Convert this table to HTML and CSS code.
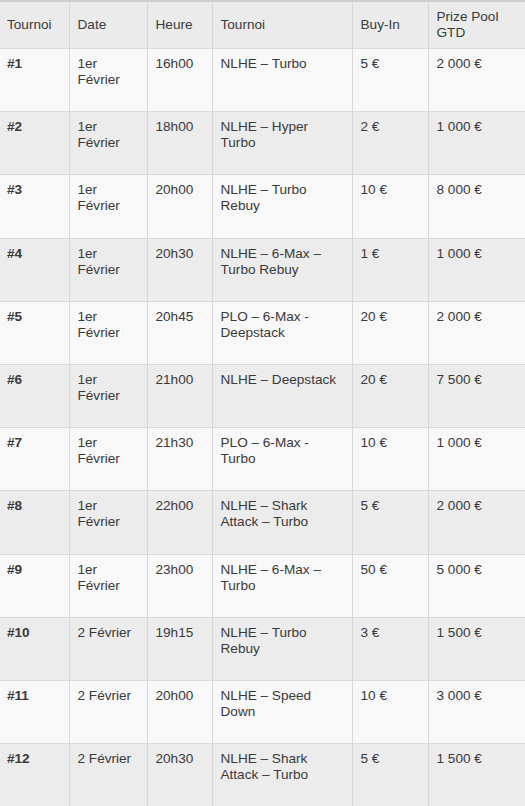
FILE: index.html
```html
<!DOCTYPE html>
<html lang="fr">
<head>
<meta charset="utf-8">
<title>Tournois</title>
<link rel="stylesheet" href="styles.css">
</head>
<body>
<table class="schedule">
  <colgroup>
    <col class="c1"><col class="c2"><col class="c3"><col class="c4"><col class="c5"><col class="c6">
  </colgroup>
  <thead>
    <tr>
      <th>Tournoi</th><th>Date</th><th>Heure</th><th>Tournoi</th><th>Buy-In</th><th>Prize Pool GTD</th>
    </tr>
  </thead>
  <tbody>
    <tr><td class="num">#1</td><td>1er Février</td><td>16h00</td><td>NLHE – Turbo</td><td>5 €</td><td>2 000 €</td></tr>
    <tr><td class="num">#2</td><td>1er Février</td><td>18h00</td><td>NLHE – Hyper Turbo</td><td>2 €</td><td>1 000 €</td></tr>
    <tr><td class="num">#3</td><td>1er Février</td><td>20h00</td><td>NLHE – Turbo Rebuy</td><td>10 €</td><td>8 000 €</td></tr>
    <tr><td class="num">#4</td><td>1er Février</td><td>20h30</td><td>NLHE – 6-Max – Turbo Rebuy</td><td>1 €</td><td>1 000 €</td></tr>
    <tr><td class="num">#5</td><td>1er Février</td><td>20h45</td><td>PLO – 6-Max - Deepstack</td><td>20 €</td><td>2 000 €</td></tr>
    <tr><td class="num">#6</td><td>1er Février</td><td>21h00</td><td>NLHE – Deepstack</td><td>20 €</td><td>7 500 €</td></tr>
    <tr><td class="num">#7</td><td>1er Février</td><td>21h30</td><td>PLO – 6-Max - Turbo</td><td>10 €</td><td>1 000 €</td></tr>
    <tr><td class="num">#8</td><td>1er Février</td><td>22h00</td><td>NLHE – Shark Attack – Turbo</td><td>5 €</td><td>2 000 €</td></tr>
    <tr><td class="num">#9</td><td>1er Février</td><td>23h00</td><td>NLHE – 6-Max – Turbo</td><td>50 €</td><td>5 000 €</td></tr>
    <tr><td class="num">#10</td><td>2 Février</td><td>19h15</td><td>NLHE – Turbo Rebuy</td><td>3 €</td><td>1 500 €</td></tr>
    <tr><td class="num">#11</td><td>2 Février</td><td>20h00</td><td>NLHE – Speed Down</td><td>10 €</td><td>3 000 €</td></tr>
    <tr><td class="num">#12</td><td>2 Février</td><td>20h30</td><td>NLHE – Shark Attack – Turbo</td><td>5 €</td><td>1 500 €</td></tr>
  </tbody>
</table>
</body>
</html>
```
FILE: styles.css
```css
html, body {
  margin: 0;
  padding: 0;
  background: #ffffff;
}
.schedule {
  width: 525px;
  border-collapse: collapse;
  table-layout: fixed;
  font-family: "Liberation Sans", Arial, sans-serif;
  font-size: 13.6px;
  line-height: 16px;
  color: #3a3a3a;
  border-top: 2px solid #cfcfcf;
}
.c1 { width: 69px; }
.c2 { width: 78px; }
.c3 { width: 65px; }
.c4 { width: 140px; }
.c5 { width: 76px; }
.c6 { width: 97px; }
.schedule th,
.schedule td {
  border: 1px solid #d9d9d9;
  padding: 6px 8px 6px 8px;
  text-align: left;
}
.schedule th:first-child,
.schedule td:first-child {
  border-left: none;
  padding-left: 7px;
}
.schedule th:last-child,
.schedule td:last-child {
  border-right: none;
}
.schedule th {
  font-weight: normal;
  background: #ebebeb;
  height: 34px;
  vertical-align: middle;
  padding-top: 6px;
  padding-bottom: 6px;
}
.schedule td {
  height: 49.2px;
  vertical-align: top;
  padding-top: 7px;
}
.schedule tbody tr:nth-child(odd) td {
  background: #f8f8f8;
}
.schedule tbody tr:nth-child(even) td {
  background: #ececec;
}
.schedule td.num {
  font-weight: bold;
}
```
